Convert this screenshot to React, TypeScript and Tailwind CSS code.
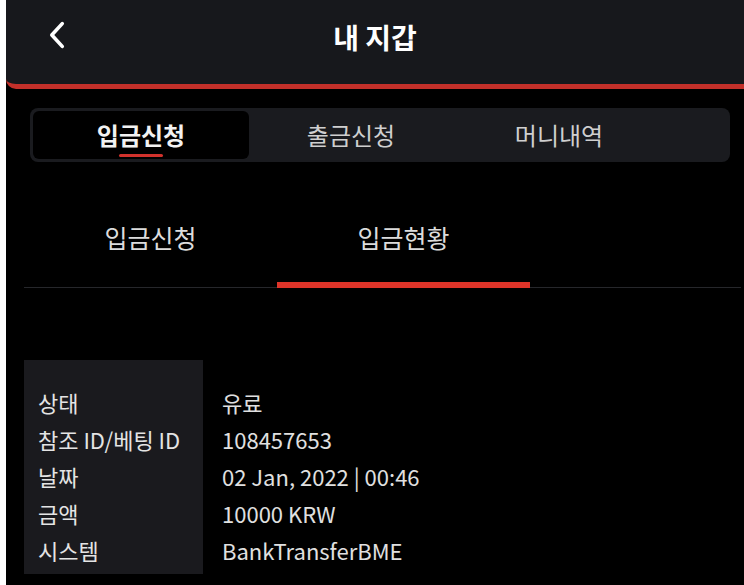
import { useState } from 'react';

const font = { fontFamily: '"Noto Sans CJK KR", "Noto Sans", sans-serif' };

const rows: [string, string][] = [
  ['상태', '유료'],
  ['참조 ID/베팅 ID', '108457653'],
  ['날짜', '02 Jan, 2022 | 00:46'],
  ['금액', '10000 KRW'],
  ['시스템', 'BankTransferBME'],
];

export default function App() {
  const [tab, setTab] = useState(0);
  const [sub, setSub] = useState(1);

  const tabs = [
    { label: '입금신청', w: 'w-[216px]' },
    { label: '출금신청', w: 'w-[204px]' },
    { label: '머니내역', w: 'w-[212px]' },
  ];

  return (
    <div className="flex min-h-[585px] bg-black" style={font}>
      {/* 왼쪽 흰 줄 */}
      <div className="w-[6px] shrink-0 bg-white" />

      <div className="flex-1 overflow-hidden">
        {/* 헤더 */}
        <div className="relative flex h-[89px] items-center justify-center rounded-bl-[10px] border-b-[5px] border-[#c3302a] bg-[#17181c]">
          <button className="absolute left-[37px] top-[19px] flex h-[32px] w-[28px] items-center justify-center text-white">
            <svg viewBox="0 0 20 30" className="h-[30px] w-[19px]" fill="none" stroke="currentColor" strokeWidth={3.8} strokeLinecap="round" strokeLinejoin="round">
              <path d="M15 3 L4 15 L15 27" />
            </svg>
          </button>
          <h1 className="-mt-[10px] text-[28px] font-bold text-white">내 지갑</h1>
        </div>

        {/* 상단 탭 */}
        <div className="ml-[24px] mr-[14px] mt-[19px] flex h-[54px] items-stretch rounded-[8px] bg-[#1a1b1f] p-[3px]">
          {tabs.map((t, i) => (
            <button
              key={t.label}
              onClick={() => setTab(i)}
              className={`${t.w} relative flex items-center justify-center rounded-[6px] text-[24px] ${
                tab === i ? 'bg-black font-bold text-[#f2f2f2]' : 'text-[#cfcfcf]'
              }`}
            >
              {t.label}
              {tab === i && <span className="absolute bottom-[2px] left-1/2 h-[3px] w-[44px] -translate-x-1/2 rounded-full bg-[#d1322c]" />}
            </button>
          ))}
        </div>

        {/* 하위 탭 */}
        <div className="ml-[18px] mr-[3px] mt-[33px] flex border-b border-[#26272b]">
          {['입금신청', '입금현황'].map((s, i) => (
            <button
              key={s}
              onClick={() => setSub(i)}
              className="-mb-px flex w-[253px] flex-col items-center"
            >
              <span className="flex h-[87px] items-center pb-[2px] text-[25px] text-[#dcdcdc]">{s}</span>
              <span className={`h-[6px] w-full ${sub === i ? 'bg-[#de3429]' : 'bg-transparent'}`} />
            </button>
          ))}
        </div>

        {/* 내역 */}
        <div className="ml-[18px] mt-[72px] flex">
          <div className="w-[179px] bg-[#1a1a1e] pb-[5px] pl-[14px] pt-[24px]">
            {rows.map(([k]) => (
              <div key={k} className="flex h-[37px] items-center whitespace-nowrap text-[22px] text-[#e4e4e4]">
                {k}
              </div>
            ))}
          </div>
          <div className="pl-[19px] pt-[24px]">
            {rows.map(([k, v]) => (
              <div key={k} className="flex h-[37px] items-center whitespace-nowrap text-[22px] text-[#e0e0e0]">
                {v}
              </div>
            ))}
          </div>
        </div>
      </div>
    </div>
  );
}
